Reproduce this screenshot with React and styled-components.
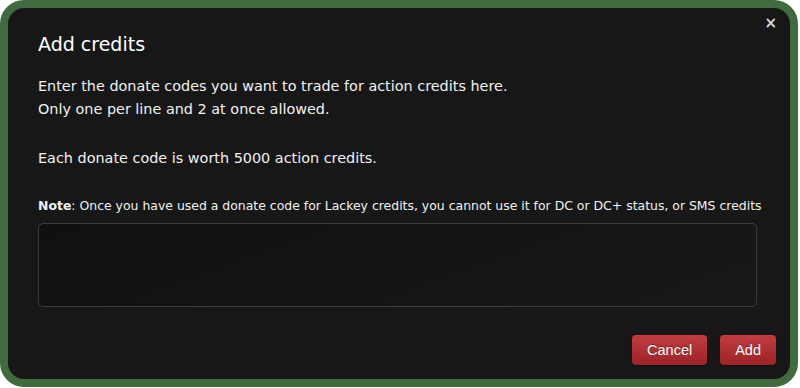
import styled, { createGlobalStyle } from "styled-components";

const GlobalStyle = createGlobalStyle`
  html, body {
    margin: 0;
    padding: 0;
    background: #ffffff;
  }
  #root {
    width: 800px;
    height: 388px;
  }
`;

const Frame = styled.div`
  width: 798px;
  height: 387px;
  box-sizing: border-box;
  border: 8px solid #416a3f;
  border-radius: 24px;
  background: #171717;
  position: relative;
  overflow: hidden;
  font-family: "DejaVu Sans", Verdana, sans-serif;
  color: #f2f2f2;
`;

const Body = styled.div`
  display: flex;
  flex-direction: column;
  padding: 25px 34px 0 30px;
`;

const Title = styled.h2`
  margin: 0;
  font-size: 19px;
  font-weight: normal;
  line-height: 22px;
  color: #ffffff;
`;

const Paragraph = styled.p`
  margin: ${(p) => p.$top || 0}px 0 0;
  font-size: 14.4px;
  line-height: 23px;
`;

const Note = styled.p`
  margin: 28px 0 0;
  font-size: 12.45px;
  line-height: 16px;
  white-space: nowrap;
  b {
    font-weight: bold;
  }
`;

const CodeInput = styled.textarea`
  margin-top: 9px;
  height: 84px;
  width: 719px;
  box-sizing: border-box;
  border: 1px solid #3b3c3e;
  border-radius: 5px;
  background: linear-gradient(160deg, #0f1011 0%, #17181a 100%);
  resize: none;
  outline: none;
  color: #eee;
`;

const Actions = styled.div`
  display: flex;
  justify-content: flex-end;
  gap: 13px;
  margin-top: 28px;
  margin-right: -20px;
`;

const Button = styled.button`
  height: 30px;
  padding: 0 ${(p) => p.$pad}px;
  border: none;
  border-radius: 4px;
  background: linear-gradient(#c33c3f, #9b2326);
  box-shadow: 0 1px 1px rgba(0, 0, 0, 0.5);
  color: #fff;
  font-family: "Liberation Sans", Arial, sans-serif;
  font-size: 14.5px;
  text-shadow: 0 -1px 0 rgba(0, 0, 0, 0.3);
`;

const Close = styled.span`
  position: absolute;
  top: 6px;
  right: 13px;
  font-family: "DejaVu Sans", sans-serif;
  font-weight: bold;
  font-size: 15px;
  color: #d8d8d8;
`;

const App = () => {
  return (
    <>
      <GlobalStyle />
      <Frame>
        <Close>×</Close>
        <Body>
          <Title>Add credits</Title>
          <Paragraph $top={20}>
            Enter the donate codes you want to trade for action credits here.
            <br />
            Only one per line and 2 at once allowed.
          </Paragraph>
          <Paragraph $top={26}>Each donate code is worth 5000 action credits.</Paragraph>
          <Note>
            <b>Note</b>: Once you have used a donate code for Lackey credits, you cannot use it for DC or DC+ status, or SMS credits
          </Note>
          <CodeInput />
          <Actions>
            <Button $pad={15}>Cancel</Button>
            <Button $pad={15}>Add</Button>
          </Actions>
        </Body>
      </Frame>
    </>
  );
};

export default App;
